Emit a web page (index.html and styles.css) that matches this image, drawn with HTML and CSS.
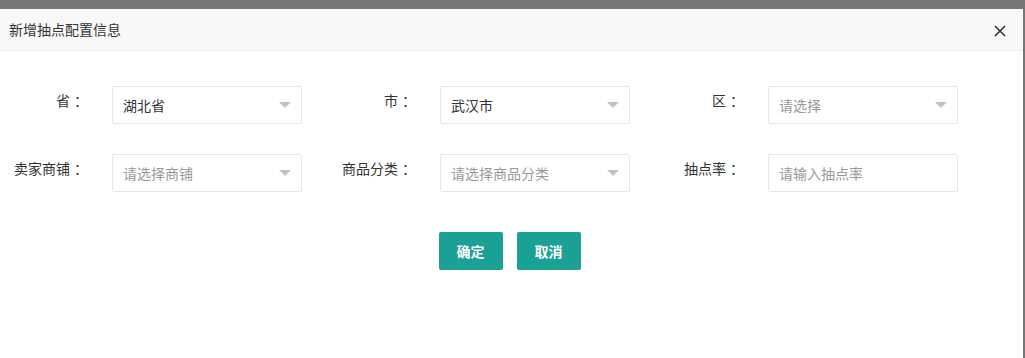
FILE: index.html
```html
<!DOCTYPE html>
<html lang="zh-CN">
<head>
  <meta charset="UTF-8">
  <title>新增抽点配置信息</title>
  <link rel="stylesheet" href="styles.css">
</head>
<body>
  <div class="dialog">
    <div class="dialog-title">
      <span>新增抽点配置信息</span>
      <span class="close">
        <svg width="12" height="12" viewBox="0 0 12 12"><path d="M1 1 L11 11 M11 1 L1 11" stroke="#2f2f3a" stroke-width="1.6" fill="none"/></svg>
      </span>
    </div>

    <form class="form">
      <div class="form-row">
        <div class="form-item">
          <label class="form-label">省<span class="colon">：</span></label>
          <div class="select"><span class="value">湖北省</span><i class="edge"></i></div>
        </div>
        <div class="form-item">
          <label class="form-label">市<span class="colon">：</span></label>
          <div class="select"><span class="value">武汉市</span><i class="edge"></i></div>
        </div>
        <div class="form-item">
          <label class="form-label">区<span class="colon">：</span></label>
          <div class="select"><span class="placeholder">请选择</span><i class="edge"></i></div>
        </div>
      </div>

      <div class="form-row">
        <div class="form-item">
          <label class="form-label">卖家商铺<span class="colon">：</span></label>
          <div class="select"><span class="placeholder">请选择商铺</span><i class="edge"></i></div>
        </div>
        <div class="form-item">
          <label class="form-label">商品分类<span class="colon">：</span></label>
          <div class="select"><span class="placeholder">请选择商品分类</span><i class="edge"></i></div>
        </div>
        <div class="form-item">
          <label class="form-label">抽点率<span class="colon">：</span></label>
          <div class="select"><span class="placeholder">请输入抽点率</span></div>
        </div>
      </div>

      <div class="actions">
        <button type="button" class="btn">确定</button>
        <button type="button" class="btn">取消</button>
      </div>
    </form>
  </div>
</body>
</html>
```

FILE: styles.css
```css
body {
  margin: 0;
  background: #777777;
  font-family: "Noto Sans CJK SC", "Liberation Sans", sans-serif;
  font-size: 14px;
  color: #333333;
  overflow: hidden;
}

.dialog {
  margin-top: 9px;
  width: 1023px;
  height: 349px;
  background: #ffffff;
}

.dialog-title {
  height: 41px;
  line-height: 41px;
  padding-left: 9px;
  padding-right: 17px;
  background: #f8f8f8;
  border-bottom: 1px solid #eeeeee;
  display: flex;
  justify-content: space-between;
  align-items: center;
  color: #333333;
}

.close {
  display: flex;
  margin-top: 3px;
}

.form {
  padding: 35px 0 0 2px;
}

.form-row {
  display: flex;
  margin-bottom: 30px;
}

.form-item {
  display: flex;
  width: 328px;
}

.form-label {
  width: 82px;
  margin-right: 28px;
  text-align: right;
  line-height: 20px;
  padding-top: 4px;
  color: #333333;
}

.colon {
  margin-left: 4px;
  margin-right: -4px;
}

.select {
  position: relative;
  width: 190px;
  height: 38px;
  box-sizing: border-box;
  border: 1px solid #e6e6e6;
  border-radius: 2px;
  padding-left: 10px;
  line-height: 36px;
}

.placeholder {
  color: #999999;
}

.edge {
  position: absolute;
  right: 10px;
  top: 15px;
  width: 0;
  height: 0;
  border-left: 6px solid transparent;
  border-right: 6px solid transparent;
  border-top: 6px solid #c2c2c2;
}

.actions {
  display: flex;
  justify-content: center;
  gap: 14px;
  margin-top: 40px;
  padding-right: 6px;
}

.btn {
  width: 64px;
  height: 38px;
  border: none;
  border-radius: 2px;
  background: #1aa094;
  color: #ffffff;
  font-family: inherit;
  font-size: 14px;
  font-weight: bold;
  cursor: pointer;
}
```
